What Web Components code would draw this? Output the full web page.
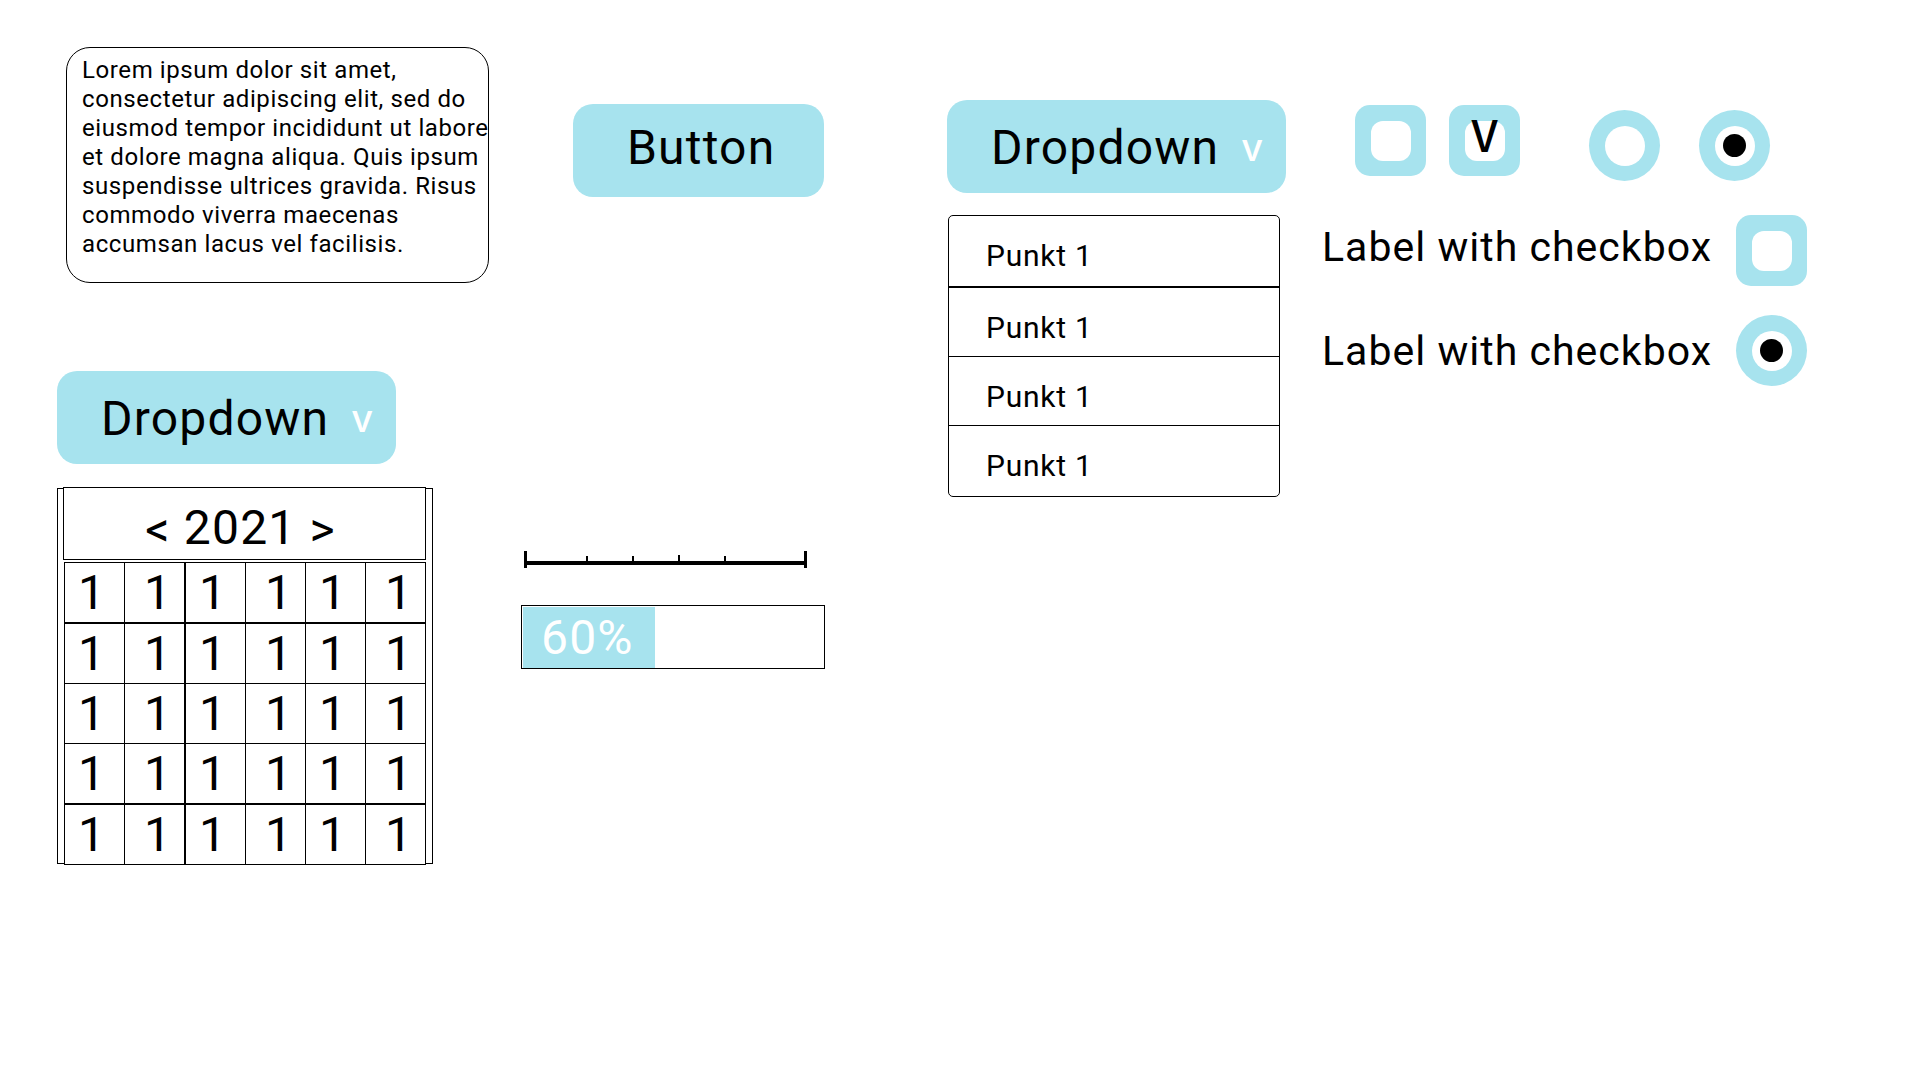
<!DOCTYPE html>
<html lang="en">
<head>
<meta charset="utf-8">
<title>UI kit</title>
<style>
  :root { --accent: #a7e3ee; --ink: #000; }
  body { margin: 0; background: #fff; color: var(--ink); font-family: Roboto, "Liberation Sans", sans-serif; }
</style>
</head>
<body>
<kit-sheet></kit-sheet>
<script>
const define = (name, html, setup) => {
  const template = document.createElement('template');
  template.innerHTML = `<style>:host{display:block}*{box-sizing:border-box;letter-spacing:0.025em}button,input,select,textarea{font:inherit;color:inherit;margin:0;border:0}</style>` + html;
  customElements.define(name, class extends HTMLElement {
    constructor() {
      super();
      this.attachShadow({ mode: 'open' }).append(template.content.cloneNode(true));
      if (setup) setup(this, this.shadowRoot);
    }
  });
};

define('kit-textbox', `
  <style>
    textarea { display: block; width: 423px; max-width: 100%; height: 236px; padding: 8px 0 7px 15px; border: 1px solid var(--ink); border-radius: 24px; font-size: 24px; line-height: 29px; white-space: pre; resize: none; overflow: hidden; background: #fff; }
  </style>
  <textarea aria-label="Text" spellcheck="false">Lorem ipsum dolor sit amet,
consectetur adipiscing elit, sed do
eiusmod tempor incididunt ut labore
et dolore magna aliqua. Quis ipsum
suspendisse ultrices gravida. Risus
commodo viverra maecenas
accumsan lacus vel facilisis.</textarea>`);

define('kit-button', `
  <style>
    button { display: block; padding: 16px 49px 21px 54px; border-radius: 20px; background: var(--accent); font-size: 48px; line-height: 56px; }
  </style>
  <button type="button"><slot></slot></button>`);

define('kit-dropdown', `
  <style>
    .field { display: inline-grid; width: 339px; align-items: center; vertical-align: top; }
    select, .mark { grid-area: 1 / 1; }
    select { appearance: none; width: 100%; height: 93px; padding: 2px 66px 0 44px; border-radius: 20px; background: var(--accent); font-size: 48px; line-height: 56px; }
    .mark { justify-self: end; margin-right: 23px; color: #fff; font: 500 38px/56px Inter, sans-serif; pointer-events: none; letter-spacing: 0; }
  </style>
  <div class="field">
    <select aria-label="Dropdown"><option>Dropdown</option></select>
    <span class="mark" aria-hidden="true">v</span>
  </div>`);

define('kit-list', `
  <style>
    ul { list-style: none; width: 332px; margin: 0; padding: 0; border: 1px solid var(--ink); border-radius: 5px; }
    li { box-sizing: content-box; height: 48px; padding: 22px 0 0 37px; border-bottom: 1px solid var(--ink); font-size: 30px; line-height: 35px; }
    li:first-child { border-bottom-width: 2px; }
    li:nth-child(2), li:nth-child(3) { height: 46px; }
    li:last-child { border-bottom: 0; }
  </style>
  <ul><li>Punkt 1</li><li>Punkt 1</li><li>Punkt 1</li><li>Punkt 1</li></ul>`);

define('kit-calendar', `
  <style>
    :host { display: inline-grid; width: 376px; }
    .frame, .body { grid-area: 1 / 1; }
    .frame { margin: 1px 0; border: 1px solid var(--ink); }
    .body { display: flex; flex-direction: column; gap: 2px; padding: 0 7px 0 6px; font-size: 48px; line-height: 56px; }
    header { display: flex; justify-content: center; gap: 13px; height: 73px; padding: 12px 8px 0 0; border: 1px solid var(--ink); background: #fff; }
    button { padding: 0; background: none; }
    table { align-self: flex-end; width: 362px; table-layout: fixed; border-collapse: separate; border-spacing: 0; border: solid var(--ink); border-width: 1px 0 0 1px; background: #fff; }
    td { height: 60px; padding: 2px 0 0 13px; border: solid var(--ink); border-width: 0 1px 1px 0; text-align: left; vertical-align: top; }
    td:nth-child(even) { padding-left: 19px; }
    td:nth-child(2) { border-right-width: 2px; }
    tr:nth-child(3n + 1) td { height: 61px; border-bottom-width: 2px; }
    col { width: 60px; }
    col:nth-child(2) { width: 61px; }
  </style>
  <div class="frame"></div>
  <div class="body">
    <header><button type="button" aria-label="Previous year">&lt;</button><span>2021</span><button type="button" aria-label="Next year">&gt;</button></header>
    <table><colgroup><col><col><col><col><col><col></colgroup><tbody></tbody></table>
  </div>`,
  (host, root) => {
    root.querySelector('tbody').innerHTML = ('<tr>' + '<td>1</td>'.repeat(6) + '</tr>').repeat(5);
  });

define('kit-slider', `
  <style>
    :host { display: inline-grid; width: 283px; }
    svg, input { grid-area: 1 / 1; width: 100%; height: 17px; display: block; }
    input { opacity: 0; }
  </style>
  <svg viewBox="0 0 283 17" shape-rendering="crispEdges" aria-hidden="true">
    <path d="M0 0h3v17h-3zM280 0h3v17h-3zM0 10h283v4h-283zM62 5h2v6h-2zM108 5h2v6h-2zM154 4h2v7h-2zM200 5h2v6h-2z"/>
  </svg>
  <input type="range" min="0" max="5" value="0" aria-label="Range">`);

define('kit-progress', `
  <style>
    .bar { width: 304px; height: 64px; padding: 1px 1px 0; border: 1px solid var(--ink); }
    .fill { width: 44%; height: 100%; padding: 3px 0 0 18px; background: var(--accent); color: #fff; font-size: 48px; line-height: 56px; }
  </style>
  <div class="bar" role="progressbar" aria-label="Progress" aria-valuenow="60"><div class="fill">60%</div></div>`);

define('kit-check', `
  <style>
    :host { display: inline-block; }
    label { display: flex; align-items: center; gap: 24px; font-size: 41px; line-height: 48px; }
    .text { padding-bottom: 8px; }
    :host([type=radio]) .text { padding-bottom: 0; }
    .text:empty { display: none; }
    .box { display: grid; place-items: center; }
    input, .hole, .tick, .dot { grid-area: 1 / 1; }
    input { appearance: none; width: 71px; height: 71px; border-radius: 15px; background: var(--accent); }
    input[type=radio] { border-radius: 50%; }
    .hole { width: 40px; height: 40px; border-radius: 12px; background: #fff; pointer-events: none; }
    input[type=radio] ~ .hole { border-radius: 50%; }
    .tick { display: none; font: 500 44px/46px "Noto Sans CJK JP", sans-serif; letter-spacing: 0; padding-bottom: 16px; pointer-events: none; }
    .dot { display: none; width: 23px; height: 23px; border-radius: 50%; background: var(--ink); pointer-events: none; }
    input[type=checkbox]:checked ~ .tick, input[type=radio]:checked ~ .dot { display: block; }
  </style>
  <label><span class="text"></span><span class="box"><input><span class="hole"></span></span></label>`,
  (host, root) => {
    const input = root.querySelector('input');
    const type = host.getAttribute('type');
    input.type = type;
    input.checked = host.hasAttribute('checked');
    const label = host.getAttribute('label');
    if (label) root.querySelector('.text').textContent = label;
    else input.setAttribute('aria-label', type);
    const mark = document.createElement('span');
    mark.className = type === 'radio' ? 'dot' : 'tick';
    if (type === 'checkbox') mark.textContent = 'V';
    root.querySelector('.box').append(mark);
  });

define('kit-sheet', `
  <style>
    main { display: grid; grid-template-columns: 464fr 426fr 375fr 541fr; padding: 47px 57px; align-items: start; }
    section { display: flex; flex-direction: column; align-items: flex-start; min-width: 0; }
    .text { padding-left: 9px; margin-bottom: 88px; }
    .dates { display: flex; flex-direction: column; gap: 23px; }
    .meters { padding-top: 57px; }
    .action { padding-left: 52px; margin-bottom: 354px; }
    .scale { padding-left: 3px; margin-bottom: 37px; display: flex; }
    .menu { padding-top: 53px; gap: 22px; }
    .items { padding-left: 1px; }
    .choices { padding-top: 58px; gap: 29px; }
    .row { display: flex; gap: 69px; padding: 0 0 5px 33px; }
    .pair { display: flex; gap: 23px; }
    .pair.round { gap: 39px; padding-top: 5px; }
  </style>
  <main>
    <section>
      <div class="text"><kit-textbox></kit-textbox></div>
      <div class="dates"><kit-dropdown></kit-dropdown><kit-calendar></kit-calendar></div>
    </section>
    <section class="meters">
      <div class="action"><kit-button>Button</kit-button></div>
      <div class="scale"><kit-slider></kit-slider></div>
      <kit-progress></kit-progress>
    </section>
    <section class="menu"><kit-dropdown></kit-dropdown><div class="items"><kit-list></kit-list></div></section>
    <section class="choices">
      <div class="row">
        <div class="pair"><kit-check type="checkbox"></kit-check><kit-check type="checkbox" checked></kit-check></div>
        <div class="pair round"><kit-check type="radio"></kit-check><kit-check type="radio" checked></kit-check></div>
      </div>
      <kit-check type="checkbox" label="Label with checkbox"></kit-check>
      <kit-check type="radio" label="Label with checkbox" checked></kit-check>
    </section>
  </main>`);
</script>
</body>
</html>
